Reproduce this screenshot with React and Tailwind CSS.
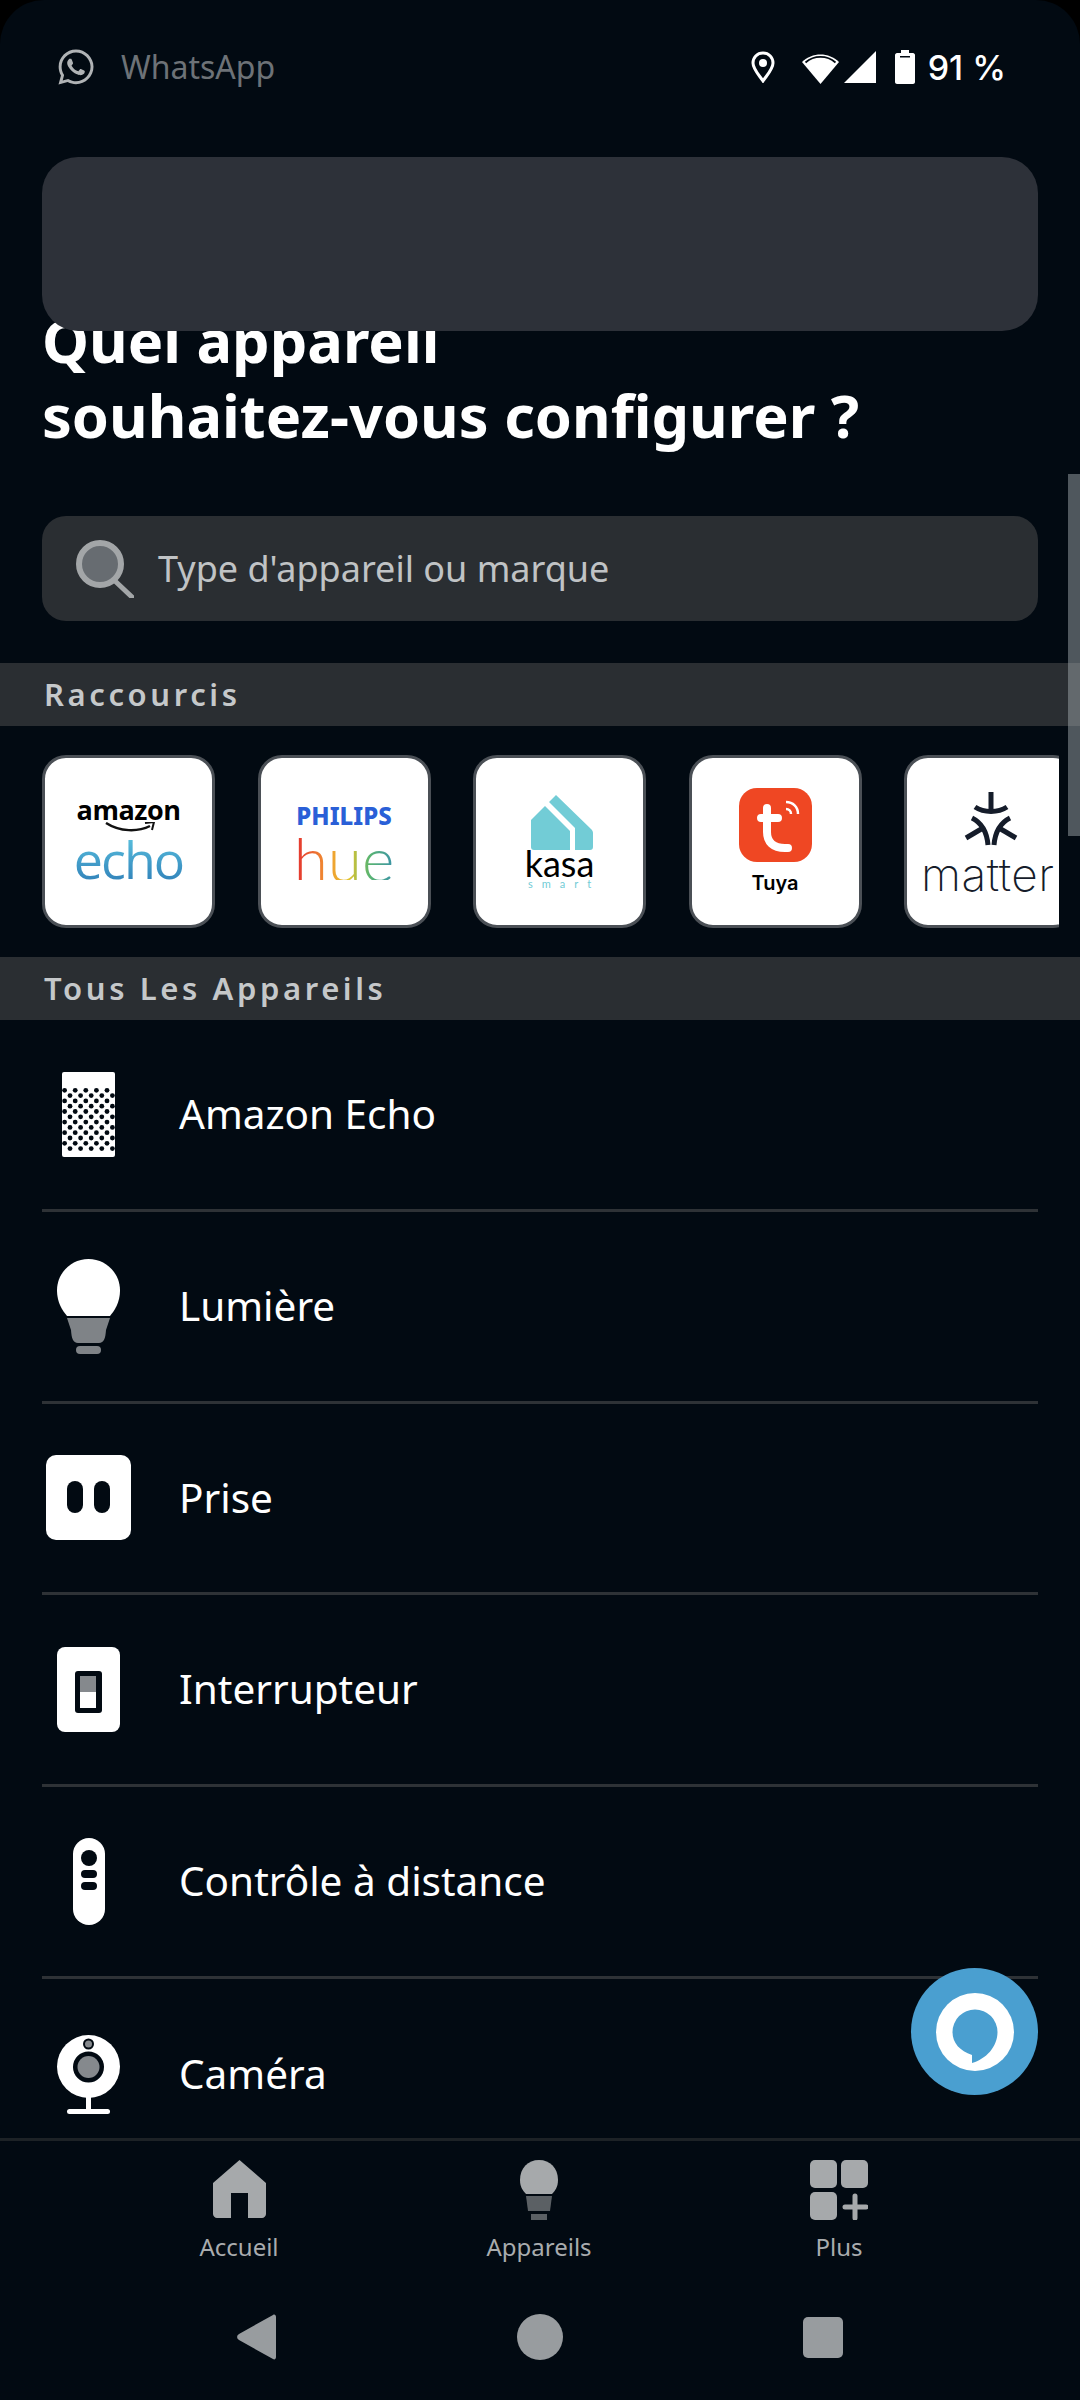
import React from "react";
import { FaWhatsapp } from "react-icons/fa";

const BG = "#020a12";

function SpeakerIcon() {
    const dots = [];
    for (let r = 0; r < 12; r++) {
        for (let c = 0; c < 6; c++) {
            dots.push(<circle key={`${r}-${c}`} cx={(r % 2 ? 8 : 2.6) + c * 10.6} cy={18.3 + r * 5.3} r="2.4" fill={BG} />);
        }
    }
    return (
        <svg width="53" height="85" viewBox="0 0 53 85">
            <rect width="53" height="85" rx="2" fill="#fff" />
            {dots}
        </svg>
    );
}

function BulbIcon() {
    return (
        <svg width="63" height="95" viewBox="0 0 63 95">
            <path d="M31.5 0C14 0 0 14 0 31.5c0 12 5.500 20 10 25.500h43c4.500-5.500 10-13.500 10-25.500C63 14 49 0 31.500 0z" fill="#fff" />
            <path d="M10 59h43l-4 12c-.5 8-2 13-7 13H21c-5 0-6.500-5-7-13z" fill="#7f8387" />
            <rect x="19" y="87" width="25" height="8" rx="4" fill="#7f8387" />
        </svg>
    );
}

function PlugIcon() {
    return (
        <svg width="85" height="85" viewBox="0 0 85 85">
            <rect width="85" height="85" rx="10" fill="#fff" />
            <rect x="21" y="26" width="16" height="32" rx="8" fill={BG} />
            <rect x="48" y="26" width="16" height="32" rx="8" fill={BG} />
        </svg>
    );
}

function SwitchIcon() {
    return (
        <svg width="63" height="85" viewBox="0 0 63 85">
            <rect width="63" height="85" rx="8" fill="#fff" />
            <rect x="18" y="24" width="27" height="42" rx="3" fill={BG} />
            <rect x="23" y="29" width="16" height="16" fill="#85898d" />
            <rect x="23" y="45" width="16" height="16" fill="#fff" />
        </svg>
    );
}

function RemoteIcon() {
    return (
        <svg width="32" height="87" viewBox="0 0 32 87">
            <rect width="32" height="87" rx="16" fill="#fff" />
            <circle cx="16" cy="20" r="8" fill={BG} />
            <rect x="8" y="32" width="16" height="8" rx="4" fill={BG} />
            <rect x="8" y="44" width="16" height="8" rx="4" fill={BG} />
        </svg>
    );
}

function CameraIcon() {
    return (
        <svg width="63" height="79" viewBox="0 0 63 79">
            <circle cx="31.5" cy="31.5" r="31.500" fill="#fff" />
            <circle cx="31.5" cy="9" r="5.500" fill={BG} />
            <circle cx="31.5" cy="9" r="3.500" fill="#85898d" />
            <circle cx="31.5" cy="32" r="15.500" fill={BG} />
            <circle cx="31.5" cy="32" r="11" fill="#85898d" />
            <rect x="29" y="62" width="5" height="14" fill="#fff" />
            <rect x="10" y="74" width="43" height="5" rx="2.500" fill="#fff" />
        </svg>
    );
}

const devices = [
    { label: "Amazon Echo", icon: <SpeakerIcon /> },
    { label: "Lumière", icon: <BulbIcon /> },
    { label: "Prise", icon: <PlugIcon /> },
    { label: "Interrupteur", icon: <SwitchIcon /> },
    { label: "Contrôle à distance", icon: <RemoteIcon /> },
    { label: "Caméra", icon: <CameraIcon /> },
];

function EchoLogo() {
    return (
        <div className="flex flex-col items-center">
            <span className="text-[27px] leading-[24px] font-bold text-black tracking-[-0.5px] font-['Open_Sans',sans-serif]">amazon</span>
            <svg width="52" height="11" viewBox="0 0 52 11" className="ml-[4px]">
                <path d="M1 1c14 9 32 9 44 3" stroke="#111" strokeWidth="2.500" fill="none" />
                <path d="M40 1l9-1-2 8" fill="none" stroke="#111" strokeWidth="2" />
            </svg>
            <span className="text-[52px] leading-[52px] tracking-[-2px] font-normal font-['Open_Sans',sans-serif] bg-[linear-gradient(180deg,#5cc4e0,#2f7fb8)] bg-clip-text text-transparent">echo</span>
        </div>
    );
}

function HueLogo() {
    return (
        <div className="flex flex-col items-center">
            <span className="text-[24px] leading-[24px] font-extrabold text-[#2a5fd7] font-['Noto_Sans',sans-serif]">PHILIPS</span>
            <span className="text-[62px] leading-[44px] mt-[8px] font-light font-['Lato',sans-serif] bg-[linear-gradient(90deg,#e53b2f_5%,#f29b32_35%,#e3c42d_55%,#5ab56f_75%,#3a93a8_100%)] bg-clip-text text-transparent">hue</span>
        </div>
    );
}

function KasaLogo() {
    return (
        <div className="flex flex-col items-center">
            <svg width="62" height="55" viewBox="0 0 62 55" className="ml-[6px]">
                <path d="M0 25L14 11 39 36V55H3c-2 0-3-1-3-3z" fill="#72ccd6" />
                <path d="M18 7L25 0 60 34c1 1 2 2 2 4v14c0 2-1 3-3 3H44V33z" fill="#72ccd6" />
            </svg>
            <span className="text-[36px] leading-[26px] text-black font-['Lato',sans-serif]">kasa</span>
            <span className="text-[11px] leading-[10px] mt-[3px] tracking-[9px] text-[#72ccd6] font-['Lato',sans-serif] mr-[-9px]">smart</span>
        </div>
    );
}

function TuyaLogo() {
    return (
        <div className="flex flex-col items-center">
            <svg width="73" height="74" viewBox="0 0 73 74">
                <rect width="73" height="74" rx="18" fill="#ef4723" />
                <path d="M28 20v24c0 10 6 16 18 16h3M22 30h17" stroke="#fff" strokeWidth="8" strokeLinecap="round" fill="none" />
                <path d="M47 21c3 0 5 2 5 5M47 14c7 0 12 5 12 12" stroke="#fff" strokeWidth="2.500" fill="none" />
            </svg>
            <span className="text-[20px] leading-[24px] mt-[9px] font-semibold text-black font-['Inter',sans-serif]">Tuya</span>
        </div>
    );
}

function MatterLogo() {
    return (
        <div className="flex flex-col items-center w-full">
            <svg width="56" height="54" viewBox="0 0 56 54">
                <g fill="none" stroke="#151c2a" strokeWidth="5">
                    <path d="M28 0v20" />
                    <path d="M12 15c9 6 23 6 32 0" />
                    <path d="M3 46l17-10" />
                    <path d="M9 26c10 5 15 15 16 27" />
                    <path d="M53 46L36 36" />
                    <path d="M47 26c-10 5-15 15-16 27" />
                </g>
            </svg>
            <span className="text-[46px] leading-[36px] mt-[10px] pl-[14px] font-extralight text-[#151c2a] tracking-[0.5px] self-start font-['Inter',sans-serif]">matter</span>
        </div>
    );
}

const shortcuts = [
    { name: "echo", logo: <EchoLogo /> },
    { name: "hue", logo: <HueLogo /> },
    { name: "kasa", logo: <KasaLogo /> },
    { name: "tuya", logo: <TuyaLogo /> },
    { name: "matter", logo: <MatterLogo /> },
];

function SectionHeader({ title }) {
    return (
        <div className="h-[63px] bg-[#2a2e32] flex items-center pl-[44px] text-[31px] font-semibold tracking-[3.6px] text-[#c5c8ca] shrink-0">
            {title}
        </div>
    );
}

function StatusBar() {
    return (
        <div className="h-[157px] shrink-0 pt-[48px] pl-[56px] pr-[74px] flex items-start justify-between">
            <div className="flex items-center h-[38px]">
                <FaWhatsapp className="w-[40px] h-[40px] text-[#b0b3b5]" />
                <span className="ml-[25px] text-[32px] text-[#6d7277] font-['Noto_Sans',sans-serif]">WhatsApp</span>
            </div>
            <div className="flex items-center h-[38px] font-['Inter',sans-serif]">
                <svg width="24" height="32" viewBox="0 0 24 32">
                    <path d="M12 2C6 2 2 6.500 2 12c0 6 6 12 10 18 4-6 10-12 10-18C22 6.500 18 2 12 2z" fill="none" stroke="#fff" strokeWidth="3" />
                    <circle cx="12" cy="12" r="4" fill="#fff" />
                </svg>
                <svg width="39" height="33" viewBox="0 0 39 33" className="ml-[26px]">
                    <path d="M1 11C11 1 28 1 38 11L19.500 33z" fill="#fff" />
                    <path d="M4.500 11.500C13 4 26 4 34.500 11.500" fill="none" stroke={BG} strokeWidth="1.800" />
                </svg>
                <svg width="32" height="32" viewBox="0 0 32 32" className="ml-[4px]">
                    <path d="M32 0v32H0z" fill="#fff" />
                </svg>
                <svg width="20" height="34" viewBox="0 0 20 34" className="ml-[19px]">
                    <path d="M6 0h8v3h4c1 0 2 1 2 2v27c0 1-1 2-2 2H2c-1 0-2-1-2-2V5c0-1 1-2 2-2h4z" fill="#fff" />
                    <rect x="5" y="6" width="10" height="1.500" fill={BG} />
                </svg>
                <span className="ml-[13px] text-[34px] font-medium text-white whitespace-nowrap">91 %</span>
            </div>
        </div>
    );
}

function BottomNav() {
    return (
        <div className="h-[262px] shrink-0 border-t-[3px] border-[#1d2226] relative z-10" style={{ backgroundColor: BG }}>
            <div className="flex h-[148px] pl-[89px]">
                <div className="w-[300px] flex flex-col items-center pt-[19px]">
                    <svg width="53" height="58" viewBox="0 0 53 58">
                        <path d="M26.500 0L53 23v31c0 2-2 4-4 4H35V33H18v25H4c-2 0-4-2-4-4V23z" fill="#a6a9ab" />
                    </svg>
                    <span className="mt-[12px] text-[24px] leading-[34px] text-[#a9acae]">Accueil</span>
                </div>
                <div className="w-[300px] flex flex-col items-center pt-[19px]">
                    <svg width="38" height="60" viewBox="0 0 38 60">
                        <path d="M19 0C8 0 0 8 0 20c0 7 3 11 6 14h26c3-3 6-7 6-14C38 8 30 0 19 0z" fill="#a6a9ab" />
                        <path d="M6 36h26l-2 15H8z" fill="#5b6064" />
                        <rect x="11" y="54" width="16" height="6" fill="#5b6064" />
                    </svg>
                    <span className="mt-[10px] text-[24px] leading-[34px] text-[#a9acae]">Appareils</span>
                </div>
                <div className="w-[300px] flex flex-col items-center pt-[19px]">
                    <svg width="58" height="60" viewBox="0 0 58 60">
                        <rect width="27" height="28" rx="5" fill="#a6a9ab" />
                        <rect x="31" width="27" height="28" rx="5" fill="#a6a9ab" />
                        <rect y="32" width="27" height="28" rx="5" fill="#a6a9ab" />
                        <path d="M45 36v22M35 47h21" stroke="#a6a9ab" strokeWidth="5" strokeLinecap="round" />
                    </svg>
                    <span className="mt-[10px] text-[24px] leading-[34px] text-[#a9acae]">Plus</span>
                </div>
            </div>
            <div className="flex items-center h-[110px] pb-[14px] pl-[237px]">
                <svg width="39" height="46" viewBox="0 0 39 46">
                    <path d="M36 1c1.500-1 3 0 3 2v40c0 2-1.500 3-3 2L2 26c-2.500-1.500-2.500-4.500 0-6z" fill="#989c9f" />
                </svg>
                <span className="w-[46px] h-[46px] rounded-full bg-[#989c9f] ml-[241px]" />
                <span className="w-[40px] h-[41px] rounded-[5px] bg-[#989c9f] ml-[240px]" />
            </div>
        </div>
    );
}

export default function App() {
    return (
        <div className="w-[1080px] h-[2400px] relative overflow-hidden bg-black font-['Noto_Sans',sans-serif]">
            <div className="w-full h-full flex flex-col rounded-t-[44px] overflow-hidden relative" style={{ backgroundColor: BG }}>
                <StatusBar />

                {/* banner sits on top of the heading */}
                <div className="absolute left-[42px] top-[157px] w-[996px] h-[174px] rounded-[36px] bg-[#2d3139] z-10" />

                <h1 className="mt-[145px] mx-[42px] text-[59.5px] leading-[75px] font-bold text-white shrink-0 whitespace-nowrap">
                    Quel appareil
                    <br />
                    souhaitez-vous configurer ?
                </h1>

                <div className="mt-[64px] mx-[42px] h-[105px] rounded-[24px] bg-[#2a2e32] flex items-center pl-[34px] shrink-0">
                    <svg width="58" height="58" viewBox="0 0 58 58" className="shrink-0">
                        <circle cx="24" cy="24" r="21" fill="#676c71" stroke="#a3a6a8" strokeWidth="6" />
                        <path d="M39 41l17 16" stroke="#a3a6a8" strokeWidth="5" strokeLinecap="round" />
                    </svg>
                    <span className="ml-[24px] text-[36px] text-[#c0c3c5]">Type d'appareil ou marque</span>
                </div>

                <div className="mt-[42px]">
                    <SectionHeader title="Raccourcis" />
                </div>

                <div className="ml-[42px] w-[1017px] h-[231px] pt-[29px] flex gap-[42.5px] overflow-hidden shrink-0">
                    {shortcuts.map((s) => (
                        <div key={s.name} className="w-[173px] h-[173px] shrink-0 rounded-[24px] bg-white border-[3px] border-[#4b5056] flex items-center justify-center overflow-hidden">
                            {s.logo}
                        </div>
                    ))}
                </div>

                <SectionHeader title="Tous Les Appareils" />

                <div className="flex-1 min-h-0 overflow-hidden px-[42px]">
                    {devices.map((d, i) => (
                        <div key={d.label} className={`h-[191.75px] flex items-center ${i < 5 ? "border-b-[3px] border-[#2e3236]" : ""}`}>
                            <div className="w-[137px] pr-[44px] flex justify-center shrink-0">{d.icon}</div>
                            <span className="text-[40.5px] text-white">{d.label}</span>
                        </div>
                    ))}
                </div>

                <BottomNav />

                {/* alexa floating button */}
                <div className="absolute left-[911px] top-[1968px] w-[127px] h-[127px] rounded-full bg-[#4a9fd0] z-20 flex items-center justify-center">
                    <svg width="78" height="78" viewBox="0 0 78 78">
                        <circle cx="39" cy="39" r="39" fill="#fff" />
                        <path d="M36 70V62C24 58 16.500 50 16.500 39a22.500 22.500 0 1 1 45 0C61.500 54 50 66 36 70z" fill="#4a9fd0" />
                    </svg>
                </div>

                {/* scroll thumb */}
                <div className="absolute right-0 top-[474px] w-[12px] h-[362px] bg-[#9ca3a8]/50 z-20" />
            </div>
        </div>
    );
}
